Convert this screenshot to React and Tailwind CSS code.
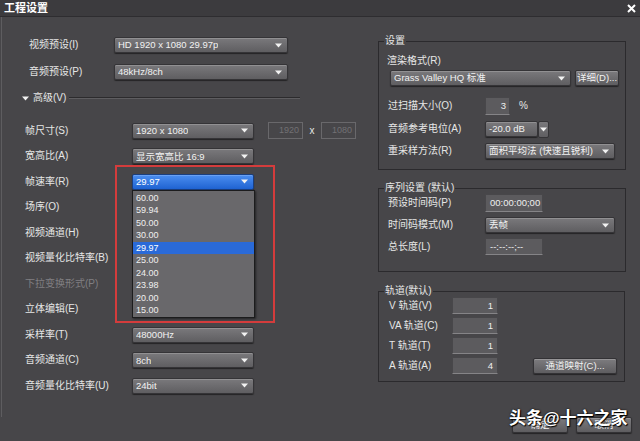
import React from "react";

function Arrow() {
  return (
    <svg width="7" height="5" viewBox="0 0 7 5" className="shrink-0">
      <path d="M0 0.5H7L3.5 4.5Z" fill="#f2f2f2" />
    </svg>
  );
}

function Combo({ className = "", text, blue = false, arrow = true }) {
  const base = blue
    ? "bg-gradient-to-b from-[#4b8ef0] to-[#1f63d2] border-[#1a3f80] text-white"
    : "bg-gradient-to-b from-[#7a797c] to-[#5f5e61] border-[#353437] text-[#f2f2f2]";
  return (
    <div
      className={`flex items-center justify-between rounded-[2px] border pl-[3px] pr-[5px] text-[9.5px] shadow-[inset_0_1px_0_rgba(255,255,255,0.18),0_1px_1px_rgba(0,0,0,0.5)] ${base} ${className}`}
    >
      <span className="truncate">{text}</span>
      {arrow && <Arrow />}
    </div>
  );
}

function Btn({ className = "", children }) {
  return (
    <div
      className={`flex items-center justify-center whitespace-nowrap rounded-[2px] border border-[#333235] bg-gradient-to-b from-[#7d7c7f] to-[#5e5d60] text-[9.5px] text-[#f2f2f2] shadow-[inset_0_1px_0_rgba(255,255,255,0.2),0_1px_1px_rgba(0,0,0,0.5)] ${className}`}
    >
      {children}
    </div>
  );
}

function Input({ className = "", children }) {
  return (
    <div
      className={`flex items-center border border-[#48474a] border-b-[#858487] bg-[#5c5b5e] text-[9.5px] text-[#efefef] ${className}`}
    >
      {children}
    </div>
  );
}

const rates = ["60.00", "59.94", "50.00", "30.00", "29.97", "25.00", "24.00", "23.98", "20.00", "15.00"];

function AdvRow({ label, dim = false, children }) {
  return (
    <div className="flex h-[25.5px] items-center">
      <span className={`ml-[23px] w-[107px] shrink-0 ${dim ? "text-[#807f82]" : ""}`}>{label}</span>
      {children}
    </div>
  );
}

function LeftColumn() {
  return (
    <div className="flex w-[376px] shrink-0 flex-col">
      <div className="mt-[20px] flex h-[16px] items-center">
        <span className="ml-[27px] w-[85px] shrink-0">视频预设(I)</span>
        <Combo className="h-[16px] w-[174px]" text="HD 1920 x 1080 29.97p" />
      </div>
      <div className="mt-[11px] flex h-[16px] items-center">
        <span className="ml-[27px] w-[85px] shrink-0">音频预设(P)</span>
        <Combo className="h-[16px] w-[174px]" text="48kHz/8ch" />
      </div>
      <div className="mt-[11px] flex h-[14px] items-center">
        <span className="ml-[20px]">
          <Arrow />
        </span>
        <span className="ml-[4px]">高级(V)</span>
        <div className="ml-[3px] mr-[78px] h-0 flex-1 border-t border-b border-t-[#2c2b2d] border-b-[#5e5d60]" />
      </div>
      <div className="mt-[13px] flex flex-col">
        <AdvRow label="帧尺寸(S)">
          <Combo className="h-[16px] w-[122px]" text="1920 x 1080" />
          <div className="ml-[14px] flex h-[17px] w-[35px] items-center justify-end border border-[#69686b] pr-[3px] text-[9px] text-[#727174]">
            1920
          </div>
          <span className="w-[18px] text-center text-[10px]">x</span>
          <div className="flex h-[17px] w-[35px] items-center justify-end border border-[#69686b] pr-[3px] text-[9px] text-[#727174]">
            1080
          </div>
        </AdvRow>
        <AdvRow label="宽高比(A)">
          <Combo className="h-[16px] w-[122px]" text="显示宽高比 16:9" />
        </AdvRow>
        <AdvRow label="帧速率(R)">
          <div className="relative">
            <Combo className="h-[16px] w-[122px]" text="29.97" blue />
            <div className="absolute left-0 top-[16px] z-10 w-[123px] border border-[#1c1c1d] bg-[#69686b] pt-[1px] shadow-[1px_1px_2px_rgba(0,0,0,0.5)]">
              {rates.map((r) => (
                <div
                  key={r}
                  className={`flex h-[12.5px] items-center pl-[3px] text-[9px] ${
                    r === "29.97" ? "bg-[#2a6ad8] text-white" : "text-[#f0f0f0]"
                  }`}
                >
                  {r}
                </div>
              ))}
            </div>
          </div>
        </AdvRow>
        <AdvRow label="场序(O)" />
        <AdvRow label="视频通道(H)" />
        <AdvRow label="视频量化比特率(B)" />
        <AdvRow label="下拉变换形式(P)" dim />
        <AdvRow label="立体编辑(E)" />
        <AdvRow label="采样率(T)">
          <Combo className="h-[16px] w-[122px]" text="48000Hz" />
        </AdvRow>
        <AdvRow label="音频通道(C)">
          <Combo className="h-[16px] w-[122px]" text="8ch" />
        </AdvRow>
        <AdvRow label="音频量化比特率(U)">
          <Combo className="h-[16px] w-[122px]" text="24bit" />
        </AdvRow>
      </div>
    </div>
  );
}

function Legend({ children }) {
  return <legend className="ml-[5px] px-[1px] text-[10px] leading-[12px]">{children}</legend>;
}

function RightColumn() {
  return (
    <div className="flex w-[248px] shrink-0 flex-col">
      <fieldset className="mt-[18px] h-[135px] w-[248px] border border-[#2b2a2d]">
        <Legend>设置</Legend>
        <div className="ml-[8px] mt-[7px] h-[14px] leading-[14px]">渲染格式(R)</div>
        <div className="ml-[11px] mt-[2px] flex h-[16px] items-center">
          <Combo className="h-[16px] w-[181px]" text="Grass Valley HQ 标准" />
          <Btn className="ml-[4px] h-[16px] w-[44px]">详细(D)...</Btn>
        </div>
        <div className="mt-[11px] flex h-[18px] items-center">
          <span className="ml-[9px] w-[97px] shrink-0">过扫描大小(O)</span>
          <Input className="h-[18px] w-[25px] justify-end pr-[3px]">3</Input>
          <span className="ml-[9px]">%</span>
        </div>
        <div className="mt-[6px] flex h-[16px] items-center">
          <span className="ml-[9px] w-[97px] shrink-0">音频参考电位(A)</span>
          <Combo className="h-[16px] w-[53px]" text="-20.0 dB" arrow={false} />
          <div className="flex h-[17px] w-[11px] items-center justify-center rounded-[2px] border border-[#353437] bg-gradient-to-b from-[#7a797c] to-[#5f5e61]">
            <Arrow />
          </div>
        </div>
        <div className="mt-[6px] flex h-[16px] items-center">
          <span className="ml-[9px] w-[97px] shrink-0">重采样方法(R)</span>
          <Combo className="h-[16px] w-[130px]" text="面积平均法 (快速且锐利)" />
        </div>
      </fieldset>

      <fieldset className="mt-[12px] h-[90px] w-[248px] border border-[#2b2a2d]">
        <Legend>序列设置 (默认)</Legend>
        <div className="flex h-[18px] items-center">
          <span className="ml-[9px] w-[97px] shrink-0">预设时间码(P)</span>
          <Input className="h-[18px] w-[58px] pl-[4px]">00:00:00;00</Input>
        </div>
        <div className="mt-[5px] flex h-[16px] items-center">
          <span className="ml-[9px] w-[97px] shrink-0">时间码模式(M)</span>
          <Combo className="h-[16px] w-[130px]" text="丢帧" />
        </div>
        <div className="mt-[5px] flex h-[17px] items-center">
          <span className="ml-[9px] w-[97px] shrink-0">总长度(L)</span>
          <Input className="h-[17px] w-[58px] pl-[4px] text-[#d8d8d8]">--:--:--;--</Input>
        </div>
      </fieldset>

      <fieldset className="mt-[13px] flex h-[97px] w-[247px] flex-col border border-[#2b2a2d]">
        <Legend>轨道(默认)</Legend>
        <div className="flex flex-col gap-[3px]">
          {[
            ["V 轨道(V)", "1"],
            ["VA 轨道(C)", "1"],
            ["T 轨道(T)", "1"],
          ].map(([l, v]) => (
            <div key={l} className="flex h-[17px] items-center">
              <span className="ml-[10px] w-[63px] shrink-0">{l}</span>
              <Input className="h-[17px] w-[46px] justify-end pr-[4px]">{v}</Input>
            </div>
          ))}
          <div className="flex h-[17px] items-center">
            <span className="ml-[10px] w-[63px] shrink-0">A 轨道(A)</span>
            <Input className="h-[17px] w-[46px] justify-end pr-[4px]">4</Input>
            <Btn className="ml-[35px] h-[16px] w-[84px]">通道映射(C)...</Btn>
          </div>
        </div>
      </fieldset>
    </div>
  );
}

export default function App() {
  return (
    <div className="relative h-[441px] w-[640px] overflow-hidden bg-[#474649] font-[family-name:'Liberation_Sans','Noto_Sans_CJK_SC',sans-serif] text-[10px] leading-none text-[#e6e6e6]">
      <div className="flex h-[17px] items-center justify-between border-b border-[#2e2d30] bg-[#3c3b3e] pl-[4px] pr-[4px]">
        <span className="text-[11px] font-bold text-white">工程设置</span>
        <svg width="9" height="9" viewBox="0 0 9 9">
          <path d="M1 1L8 8M8 1L1 8" stroke="#ffffff" strokeWidth="2" />
        </svg>
      </div>
      <div className="ml-[1px] flex h-[400px] border-l border-[#5e5d60]">
        <LeftColumn />
        <RightColumn />
      </div>
      <div className="flex justify-end gap-[8px] pr-[8px]">
        <Btn className="h-[16px] w-[56px]">确定</Btn>
        <Btn className="h-[16px] w-[56px]">取消</Btn>
      </div>

      <div className="pointer-events-none absolute left-[115px] top-[165px] z-20 h-[158px] w-[160px] border-2 border-[#d43c3c]" />
      <div className="pointer-events-none absolute left-[509px] top-[410px] z-30 text-[17px] font-bold leading-none text-white [text-shadow:0_0_2px_#000,1px_1px_1px_#000]">
        头条@十六之家
      </div>
    </div>
  );
}
